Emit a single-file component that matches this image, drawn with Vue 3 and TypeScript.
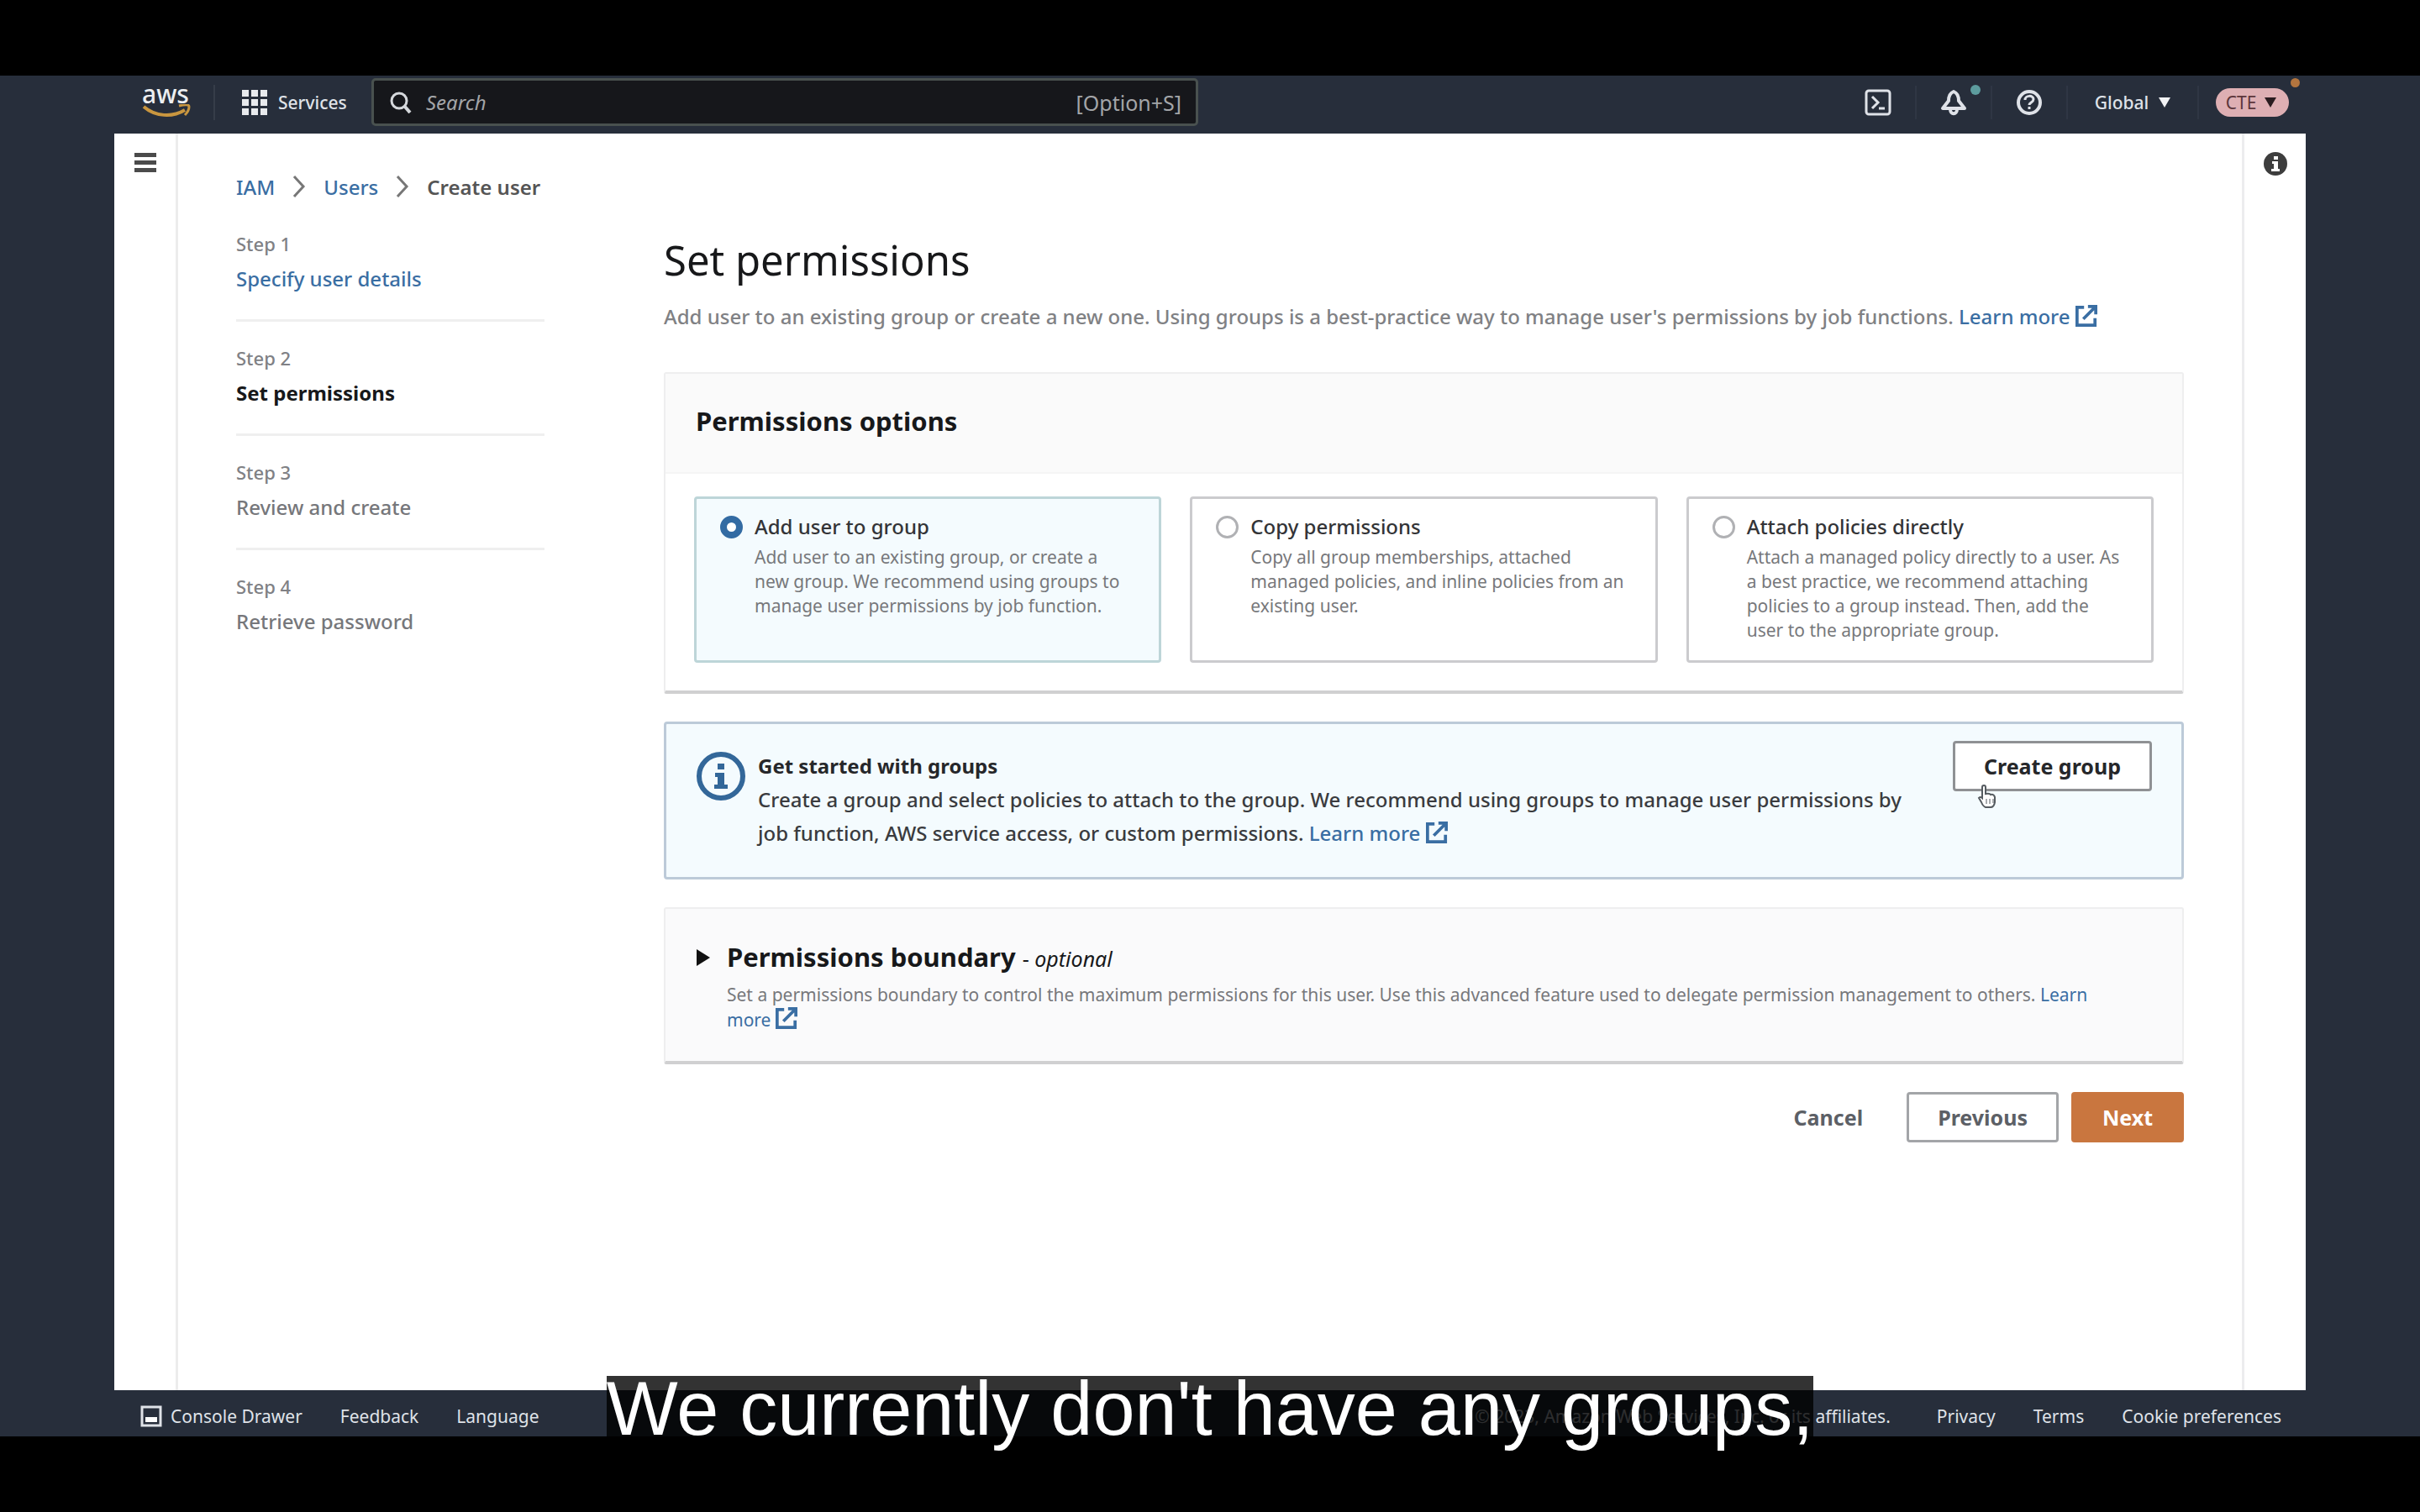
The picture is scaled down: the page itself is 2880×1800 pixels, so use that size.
<script setup lang="ts">
import { ref } from 'vue'

interface Option { id: string; title: string; text: string }
interface Step { label: string; title: string; state: 'done' | 'current' | 'next' }

const steps: Step[] = [
  { label: 'Step 1', title: 'Specify user details', state: 'done' },
  { label: 'Step 2', title: 'Set permissions', state: 'current' },
  { label: 'Step 3', title: 'Review and create', state: 'next' },
  { label: 'Step 4', title: 'Retrieve password', state: 'next' },
]

const options: Option[] = [
  { id: 'group', title: 'Add user to group', text: 'Add user to an existing group, or create a new group. We recommend using groups to manage user permissions by job function.' },
  { id: 'copy', title: 'Copy permissions', text: 'Copy all group memberships, attached managed policies, and inline policies from an existing user.' },
  { id: 'attach', title: 'Attach policies directly', text: 'Attach a managed policy directly to a user. As a best practice, we recommend attaching policies to a group instead. Then, add the user to the appropriate group.' },
]

const selected = ref<string>('group')
const query = ref<string>('')
</script>

<template>
  <div class="player">
    <div class="console">
      <header class="topbar">
        <a class="logo" href="#" aria-label="aws">
          <span class="logo-text">aws</span>
          <svg class="smile" viewBox="0 0 58 18" aria-hidden="true">
            <path d="M2 3 C16 15 36 16 51 7" fill="none" stroke="#c9963f" stroke-width="4" />
            <path d="M44 2 Q56 -1 56 3 Q56 8 51 13" fill="none" stroke="#c9963f" stroke-width="3" />
          </svg>
        </a>
        <button class="services" type="button">
          <svg viewBox="0 0 30 30" width="30" height="30" fill="#e8eaed" aria-hidden="true">
            <path d="M0 0h8v8H0zM11 0h8v8h-8zM22 0h8v8h-8zM0 11h8v8H0zM11 11h8v8h-8zM22 11h8v8h-8zM0 22h8v8H0zM11 22h8v8h-8zM22 22h8v8h-8z" />
          </svg>
          Services
        </button>
        <label class="search">
          <svg viewBox="0 0 26 26" width="26" height="26" fill="none" stroke="#d5d8dc" stroke-width="3" aria-hidden="true">
            <circle cx="11" cy="11" r="9" /><path d="M17 17l7 8" stroke-width="4" />
          </svg>
          <input v-model="query" type="text" placeholder="Search" aria-label="Search" />
          <span class="hint">[Option+S]</span>
        </label>
        <nav class="tools">
          <button type="button" aria-label="CloudShell">
            <svg viewBox="0 0 32 32" width="32" height="32" fill="none" stroke="#dfe2e8" stroke-width="3" aria-hidden="true">
              <rect x="2" y="2" width="28" height="28" rx="3" /><path d="M9 9l7 7-7 7M17 23h7" />
            </svg>
          </button>
          <button type="button" aria-label="Notifications">
            <svg viewBox="0 0 32 32" width="32" height="32" fill="none" stroke="#dfe2e8" stroke-width="4" stroke-linejoin="round" aria-hidden="true">
              <path d="M16 3c-5 2-6 6-6 11l-7 9h26l-7-9c0-5-1-9-6-11z" /><path d="M12 24c0 7 8 7 8 0" />
            </svg>
            <span class="dot teal"></span>
          </button>
          <button type="button" aria-label="Help">
            <svg viewBox="0 0 32 32" width="32" height="32" fill="none" stroke="#dfe2e8" stroke-width="3" aria-hidden="true">
              <circle cx="16" cy="16" r="13" stroke-width="4" /><path d="M11 13c0-6 10-6 10-1 0 4-5 4-5 7M16 21v3" />
            </svg>
          </button>
          <button class="region" type="button">Global
            <svg viewBox="0 0 14 12" width="14" height="12" aria-hidden="true"><path d="M0 0h14l-7 12z" fill="#f2f3f5" /></svg>
          </button>
          <button class="account" type="button"><span class="pill">CTE
            <svg viewBox="0 0 14 12" width="14" height="12" aria-hidden="true"><path d="M0 0h14l-7 12z" fill="#2a1c1f" /></svg>
          </span><span class="dot orange"></span></button>
        </nav>
      </header>

      <div class="page">
        <aside class="rail">
          <button type="button" aria-label="Open navigation">
            <svg viewBox="0 0 26 26" width="26" height="26" fill="#4b4b4b" aria-hidden="true"><path d="M0 1h26v5H0zM0 10h26v5H0zM0 19h26v5H0z" /></svg>
          </button>
        </aside>
        <div class="body">
          <nav class="crumbs" aria-label="Breadcrumb">
            <a href="#">IAM</a>
            <svg viewBox="0 0 16 28" width="16" height="28" aria-hidden="true"><path d="M2 2l11 12-11 12" fill="none" stroke="#777" stroke-width="3" /></svg>
            <a href="#">Users</a>
            <svg viewBox="0 0 16 28" width="16" height="28" aria-hidden="true"><path d="M2 2l11 12-11 12" fill="none" stroke="#777" stroke-width="3" /></svg>
            <span>Create user</span>
          </nav>
          <div class="columns">
            <ol class="steps">
              <li v-for="s in steps" :key="s.label">
                <small>{{ s.label }}</small>
                <a v-if="s.state === 'done'" href="#">{{ s.title }}</a>
                <span v-else :class="s.state">{{ s.title }}</span>
              </li>
            </ol>
            <main>
              <h1>Set permissions</h1>
              <p class="intro">Add user to an existing group or create a new one. Using groups is a best-practice way to manage user's permissions by job functions.
                <a href="#">Learn more <svg class="ext" viewBox="0 0 28 28" aria-hidden="true"><path d="M11 3H2v23h23V17M16 2h10v10M25 3L10 18" /></svg></a></p>

              <section class="card">
                <h2 class="card-head">Permissions options</h2>
                <div class="tiles">
                  <label v-for="o in options" :key="o.id" class="tile" :class="{ on: selected === o.id }">
                    <input v-model="selected" type="radio" name="permission" :value="o.id" />
                    <span class="tile-copy"><strong>{{ o.title }}</strong><span>{{ o.text }}</span></span>
                  </label>
                </div>
              </section>

              <section class="notice">
                <svg viewBox="0 0 60 60" width="60" height="60" aria-hidden="true">
                  <circle cx="30" cy="30" r="26" fill="none" stroke="#336799" stroke-width="6" />
                  <path d="M26 15h8v7h-8zM23 26h11v14h4v5H22v-5h4v-9h-3z" fill="#336799" />
                </svg>
                <div class="notice-copy">
                  <h3>Get started with groups</h3>
                  <p>Create a group and select policies to attach to the group. We recommend using groups to manage user permissions by job function, AWS service access, or custom permissions.
                    <a href="#">Learn more <svg class="ext" viewBox="0 0 28 28" aria-hidden="true"><path d="M11 3H2v23h23V17M16 2h10v10M25 3L10 18" /></svg></a></p>
                </div>
                <div class="create-wrap">
                  <button class="btn create" type="button">Create group</button>
                  <svg class="pointer" viewBox="0 0 24 30" aria-hidden="true">
                    <path d="M6 17V4q0-2 2-2t2 2v8q5-1 6 1 4-1 5 3v6q-1 6-5 6h-6q-3-1-5-6l-3-5q2-2 4 0z" fill="#fff" stroke="#555b60" stroke-width="2" />
                    <path d="M11 18v6M15 18v6M19 18v5" stroke="#555b60" stroke-width="1" />
                  </svg>
                </div>
              </section>

              <section class="card boundary">
                <svg class="caret" viewBox="0 0 16 20" aria-hidden="true"><path d="M0 0l16 10-16 10z" fill="#111" /></svg>
                <div>
                  <h2>Permissions boundary <em>- <i>optional</i></em></h2>
                  <p>Set a permissions boundary to control the maximum permissions for this user. Use this advanced feature used to delegate permission management to others. <a href="#">Learn more <svg class="ext" viewBox="0 0 28 28" aria-hidden="true"><path d="M11 3H2v23h23V17M16 2h10v10M25 3L10 18" /></svg></a></p>
                </div>
              </section>

              <div class="actions">
                <button class="btn plain" type="button">Cancel</button>
                <button class="btn" type="button">Previous</button>
                <button class="btn primary" type="button">Next</button>
              </div>
            </main>
          </div>
        </div>
        <aside class="rail right">
          <button type="button" aria-label="Info">
            <svg viewBox="0 0 28 28" width="28" height="28" aria-hidden="true"><circle cx="14" cy="14" r="14" fill="#3d3d3d" /><path d="M12 5h5v4h-5zM10 11h7v9h2v3H9v-3h3v-6h-2z" fill="#fff" /></svg>
          </button>
        </aside>
      </div>

      <footer class="bottombar">
        <button type="button">
          <svg viewBox="0 0 26 26" width="26" height="26" aria-hidden="true"><path d="M2 2h22v22H2z" fill="none" stroke="#dfe2e8" stroke-width="3" /><path d="M6 14h14v6H6z" fill="#fff" /></svg>
          Console Drawer
        </button>
        <a href="#">Feedback</a>
        <a href="#">Language</a>
        <span class="legal">© 2023, Amazon Web Services, Inc. or its affiliates.</span>
        <a href="#">Privacy</a>
        <a href="#">Terms</a>
        <a href="#">Cookie preferences</a>
      </footer>
    </div>
    <div class="caption"><span>We currently don't have any groups,</span></div>
  </div>
</template>

<style>
body { margin: 0; background: #000; }
</style>

<style scoped>
* { box-sizing: border-box; }
.player {
  position: relative;
  min-height: 100vh;
  display: flex;
  flex-direction: column;
  padding: 90px 0;
  background: #000;
  font-family: "Noto Sans", sans-serif;
  font-size: 24px;
  color: #1c1c1e;
}
.console { flex: 1; display: flex; flex-direction: column; padding: 0 136px; background: #272e3b; }
button { font: inherit; color: inherit; background: none; border: 0; padding: 0; cursor: pointer; }
a { color: #3a6ea3; text-decoration: none; }
h1, h2, h3, p, ol { margin: 0; padding: 0; }
svg { flex: none; }

.topbar { display: flex; align-items: center; height: 69px; padding-bottom: 6px; font-size: 22px; color: #dfe2e8; }
.logo { width: 120px; height: 42px; padding-left: 33px; border-right: 2px solid #363d49; color: #eceef1; display: flex; flex-direction: column; }
.logo-text { font-size: 30px; line-height: 21px; font-weight: 500; }
.smile { width: 58px; height: 18px; margin-top: 2px; }
.services { display: flex; align-items: center; gap: 13px; width: 186px; padding-left: 32px; font-size: 21px; font-weight: 500; }
.search { display: flex; align-items: center; gap: 17px; width: 984px; height: 57px; padding: 0 17px 0 19px; border: 3px solid #49514f; border-radius: 5px; background: #16171b; }
.search input { flex: 1; min-width: 0; border: 0; padding: 0; outline: 0; background: none; font: italic 24px "Noto Sans", sans-serif; color: #dfe2e8; }
.search input::placeholder { color: #a3a5a8; opacity: 1; }
.hint { font-size: 25px; color: #a3a5a8; }
.tools { display: flex; align-items: center; margin-left: auto; }
.tools button { position: relative; display: flex; align-items: center; justify-content: center; width: 90px; height: 40px; border-right: 2px solid #2f3644; }
.tools .region { width: 156px; gap: 12px; font-size: 21px; font-weight: 500; }
.tools .account { width: 127px; border: 0; }
.pill { display: flex; align-items: center; gap: 10px; height: 34px; padding: 0 15px 0 12px; border-radius: 17px; background: #deafb3; color: #5c363b; font-size: 21px; }
.dot { position: absolute; border-radius: 50%; }
.teal { width: 12px; height: 12px; right: 12px; top: -1px; background: #5d9c9e; }
.orange { width: 11px; height: 11px; right: 7px; top: -9px; background: #b3753f; }

.page { flex: 1; display: flex; background: #fff; }
.rail { width: 76px; display: flex; flex-direction: column; align-items: center; padding-top: 22px; border-right: 3px solid #ececec; }
.rail.right { border-right: 0; border-left: 3px solid #ececee; }
.body { flex: 1; min-width: 0; padding: 43px 69px 0 69px; }
.crumbs { display: flex; align-items: center; gap: 21px; height: 40px; }
.crumbs span { color: #555; font-weight: 600; }
.crumbs a { font-weight: 500; }
.columns { display: flex; gap: 142px; }
.steps { list-style: none; width: 367px; padding-top: 28px; }
.steps li { height: 136px; display: flex; flex-direction: column; line-height: 40px; font-weight: 500; }
.steps li:not(:last-child)::after { content: ""; height: 3px; margin-top: 28px; background: #efefef; }
.steps small { font-size: 22px; line-height: 40px; height: 42px; color: #808185; }
.steps .current { font-weight: 700; color: #17181a; }
.steps .next { color: #76777b; }
main { flex: 1; min-width: 0; }
h1 { margin-top: 37px; font-size: 49px; line-height: 60px; font-weight: 400; color: #17181a; }
.intro { margin-top: 18px; line-height: 40px; font-weight: 500; color: #808184; white-space: nowrap; }
.ext { width: 26px; height: 26px; vertical-align: -3px; fill: none; stroke: #3a6ea3; stroke-width: 4; }

.card { margin-top: 46px; border: 2px solid #eeeeef; border-bottom: 4px solid #d0d0d1; border-radius: 3px; background: #fff; }
.card h2 { font-size: 31px; font-weight: 700; line-height: 40px; color: #17181a; }
.card .card-head { padding: 36px 36px 41px; border-bottom: 2px solid #f5f5f5; background: #fafafa; }
.tiles { display: grid; grid-template-columns: repeat(3, 1fr); gap: 34px; padding: 27px 34px 33px; }
.tile { display: flex; gap: 14px; height: 198px; padding: 13px 31px 0 28px; border: 3px solid #cbcbce; border-radius: 4px; background: #fff; }
.tile.on { border-color: #bdd5d8; background: #f4fbfe; }
.tile input { appearance: none; flex: none; width: 27px; height: 27px; margin: 7px 0 0; border: 3px solid #b0b1b4; border-radius: 50%; background: #fff; }
.tile input:checked { border: 8px solid #336ba3; }
.tile-copy { display: flex; flex-direction: column; gap: 2px; font-size: 21px; line-height: 29px; color: #77787b; }
.tile strong { font-size: 24px; line-height: 40px; font-weight: 500; color: #333437; }

.notice { display: flex; margin-top: 33px; min-height: 188px; padding: 20px 35px 0; border: 3px solid #bccad8; border-radius: 4px; background: #f4fbfe; }
.notice > svg { margin: 12px 14px 0 0; }
.notice-copy { flex: 1; min-width: 0; padding-right: 40px; line-height: 40px; font-weight: 500; margin-top: 10px; color: #3a3b3e; }
.notice h3 { font-size: 24px; line-height: 40px; font-weight: 700; color: #26272a; }
.create-wrap { position: relative; }
.btn { height: 60px; padding: 0 34px; border: 3px solid #a3a5a8; border-radius: 4px; background: #fff; color: #5c6066; font-size: 25px; font-weight: 700; }
.create { border-color: #8f9194; color: #26272a; }
.pointer { position: absolute; left: 29px; top: 51px; width: 24px; height: 30px; }

.boundary { display: flex; gap: 20px; margin-top: 33px; padding: 37px 80px 34px 37px; background: #fafafb; }
.caret { width: 16px; height: 20px; margin-top: 11px; }
.boundary h2 em { font-size: 25px; font-weight: 400; font-style: normal; }
.boundary h2 i { font-style: italic; }
.boundary p { margin-top: 9px; font-size: 21px; line-height: 29px; color: #77787b; }
.actions { display: flex; justify-content: flex-end; gap: 15px; margin-top: 33px; }
.btn.plain { background: none; border-color: transparent; }
.btn.primary { border-color: #c9763f; background: #c9763f; color: #fff; }

.bottombar { display: flex; align-items: center; gap: 45px; height: 55px; padding: 6px 29px 0 31px; font-size: 21px; color: #dfe2e8; }
.bottombar a { color: inherit; }
.bottombar button { display: flex; align-items: center; gap: 10px; }
.legal { margin-left: auto; padding-right: 10px; }

.caption { position: absolute; left: 0; right: 0; top: 1638px; display: flex; justify-content: center; }
.caption span { padding-bottom: 14px; background: rgba(0, 0, 0, 0.8); color: #fff; font: 90px/78px "Liberation Sans", Arial, sans-serif; }
</style>
